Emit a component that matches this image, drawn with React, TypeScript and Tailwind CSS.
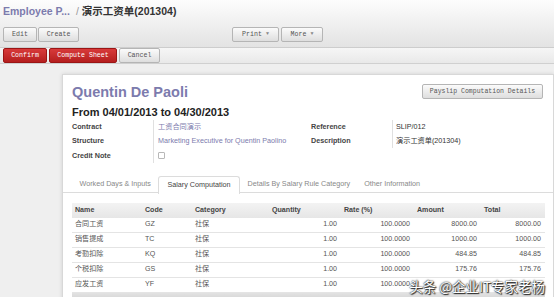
import React from 'react';

const SANS = "font-['Liberation_Sans','Noto_Sans_CJK_SC',sans-serif]";
const MONO = "font-['Liberation_Mono','Noto_Sans_CJK_SC',monospace]";

const ROWS = [
  { name: '合同工资', code: 'GZ', cat: '社保', qty: '1.00', rate: '100.0000', amount: '8000.00', total: '8000.00' },
  { name: '销售提成', code: 'TC', cat: '社保', qty: '1.00', rate: '100.0000', amount: '1000.00', total: '1000.00' },
  { name: '考勤扣除', code: 'KQ', cat: '社保', qty: '1.00', rate: '100.0000', amount: '484.85', total: '484.85' },
  { name: '个税扣除', code: 'GS', cat: '社保', qty: '1.00', rate: '100.0000', amount: '175.76', total: '175.76' },
  { name: '应发工资', code: 'YF', cat: '社保', qty: '1.00', rate: '100.0000', amount: '', total: '' },
];

const GrayBtn = ({ label, w, caret }: { label: string; w: string; caret?: boolean }) => (
  <div
    className={`${w} h-[15px] flex items-center justify-center rounded-[2px] border border-[#b5b5b5] bg-gradient-to-b from-[#fbfbfb] to-[#dedede] text-[6.6px] text-[#555] ${MONO}`}
  >
    {label}
    {caret && <span className="ml-[4px] text-[5px] text-[#888]">▼</span>}
  </div>
);

const RedBtn = ({ label, w }: { label: string; w: string }) => (
  <div
    className={`${w} h-[15px] flex items-center justify-center rounded-[2px] border border-[#9b1515] bg-gradient-to-b from-[#d83a3a] to-[#b51e1e] text-[6.6px] text-white ${MONO}`}
  >
    {label}
  </div>
);

export default function App() {
  return (
    <div className={`w-[554px] h-[297px] overflow-hidden relative bg-[#efefef] ${SANS}`}>
      {/* top bar */}
      <div className="h-[48px] border-b border-[#cdcdcd] bg-gradient-to-b from-[#fdfdfd] to-[#e3e3e3] px-[3px] pt-[4px]">
        <div className="h-[15px] flex items-center text-[10.5px] font-bold leading-none">
          <span className="text-[#7c7bad]">Employee P...</span>
          <span className="ml-[6px] mr-[3px] font-normal text-[#999]">/</span>
          <span className="text-[#333]">演示工资单(201304)</span>
        </div>
        <div className="mt-[8px] flex gap-[1px]">
          <GrayBtn label="Edit" w="w-[34px]" />
          <GrayBtn label="Create" w="w-[41px]" />
          <div className="ml-[152px] flex gap-[2px]">
            <GrayBtn label="Print" w="w-[47px]" caret />
            <GrayBtn label="More" w="w-[42px]" caret />
          </div>
        </div>
      </div>

      {/* action bar */}
      <div className="h-[16px] border-b border-[#d0d0d0] bg-gradient-to-b from-[#f6f6f6] to-[#e9e9e9] px-[3px] flex items-start gap-[2px]">
        <RedBtn label="Confirm" w="w-[44px]" />
        <RedBtn label="Compute Sheet" w="w-[68px]" />
        <GrayBtn label="Cancel" w="w-[41px]" />
      </div>

      {/* sheet */}
      <div className="pl-[62px] pt-[10px]">
        <div className="h-[240px] bg-white border border-[#d8d8d8] shadow-[0_0_4px_rgba(0,0,0,0.12)] px-[9px] pt-[8px]">
          <div className="flex items-start justify-between">
            <div>
              <div className="text-[14.5px] font-bold leading-[18px] text-[#7c7bad]">Quentin De Paoli</div>
              <div className="mt-[4px] text-[11px] font-bold leading-[14px] text-[#222]">From 04/01/2013 to 04/30/2013</div>
            </div>
            <div
              className={`mt-[1px] mr-[1px] w-[121px] h-[15px] flex items-center justify-center rounded-[2px] border border-[#b5b5b5] bg-gradient-to-b from-[#fbfbfb] to-[#dedede] text-[6.5px] text-[#555] ${MONO}`}
            >
              Payslip Computation Details
            </div>
          </div>

          {/* fields */}
          <div className="mt-[1px] flex text-[7.2px] leading-none">
            <div className="flex">
              <div className="w-[81px] font-bold text-[#444]">
                <div className="h-[14px] flex items-center">Contract</div>
                <div className="h-[14px] flex items-center">Structure</div>
                <div className="h-[15px] flex items-center">Credit Note</div>
              </div>
              <div className="w-[155px] border-l border-[#e0e0e0] pl-[4px]">
                <div className="h-[14px] flex items-center text-[#7c7bad]">工资合同演示</div>
                <div className="h-[14px] flex items-center text-[#7c7bad]">Marketing Executive for Quentin Paolino</div>
                <div className="h-[15px] flex items-center">
                  <div className="w-[7px] h-[7px] border border-[#b8b8b8] rounded-[1px] bg-white" />
                </div>
              </div>
            </div>
            <div className="flex">
              <div className="w-[84px] pl-[3px] font-bold text-[#444]">
                <div className="h-[14px] flex items-center">Reference</div>
                <div className="h-[14px] flex items-center">Description</div>
              </div>
              <div className="h-[28px] border-l border-[#e0e0e0] pl-[3px] text-[#333]">
                <div className="h-[14px] flex items-center">SLIP/012</div>
                <div className="h-[14px] flex items-center">演示工资单(201304)</div>
              </div>
            </div>
          </div>

          {/* tabs */}
          <div className="mt-[13px] -mx-[9px] px-[9px] border-b border-[#dcdcdc] flex text-[7.2px] text-[#888] h-[17px]">
            <div className="px-[7.5px] flex items-center">Worked Days &amp; Inputs</div>
            <div className="px-[8px] flex items-center border border-b-0 border-[#dcdcdc] rounded-t-[3px] bg-white text-[#444] -mb-[1px] h-[18px]">
              Salary Computation
            </div>
            <div className="px-[8px] flex items-center">Details By Salary Rule Category</div>
            <div className="px-[6px] flex items-center">Other Information</div>
          </div>

          {/* table */}
          <div className="mt-[10px] mr-[-1px] text-[7.1px] leading-none">
            <div className="h-[15px] flex items-center font-bold text-[#444] bg-gradient-to-b from-[#f3f3f3] to-[#e6e6e6]">
              <div className="w-[70px] pl-[3px]">Name</div>
              <div className="w-[50px] pl-[3px]">Code</div>
              <div className="w-[76px] pl-[3px]">Category</div>
              <div className="w-[73px] pl-[4px]">Quantity</div>
              <div className="w-[73px] pl-[3px]">Rate (%)</div>
              <div className="w-[67px] pl-[3px]">Amount</div>
              <div className="flex-1 pl-[3px]">Total</div>
            </div>
            {ROWS.map(r => (
              <div key={r.code} className="h-[15px] flex items-center border-b border-[#e4e4e4] text-[#555]">
                <div className="w-[70px] pl-[3px]">{r.name}</div>
                <div className="w-[50px] pl-[3px]">{r.code}</div>
                <div className="w-[76px] pl-[3px]">{r.cat}</div>
                <div className="w-[73px] pr-[4px] text-right">{r.qty}</div>
                <div className="w-[73px] pr-[4px] text-right">{r.rate}</div>
                <div className="w-[67px] pr-[4px] text-right">{r.amount}</div>
                <div className="flex-1 pr-[4px] text-right">{r.total}</div>
              </div>
            ))}
            <div className="h-[6px] bg-gradient-to-b from-[#e2e2e2] to-[#d6d6d6]" />
          </div>
        </div>
      </div>

      {/* watermark */}
      <div className="absolute right-[9px] bottom-[4px] text-[13.5px] leading-none text-white [text-shadow:0_0_1px_#222,0_0_2px_#333,1px_1px_1px_#222] font-['Noto_Sans_CJK_SC',sans-serif]">
        头条 @企业IT专家老杨
      </div>
    </div>
  );
}
